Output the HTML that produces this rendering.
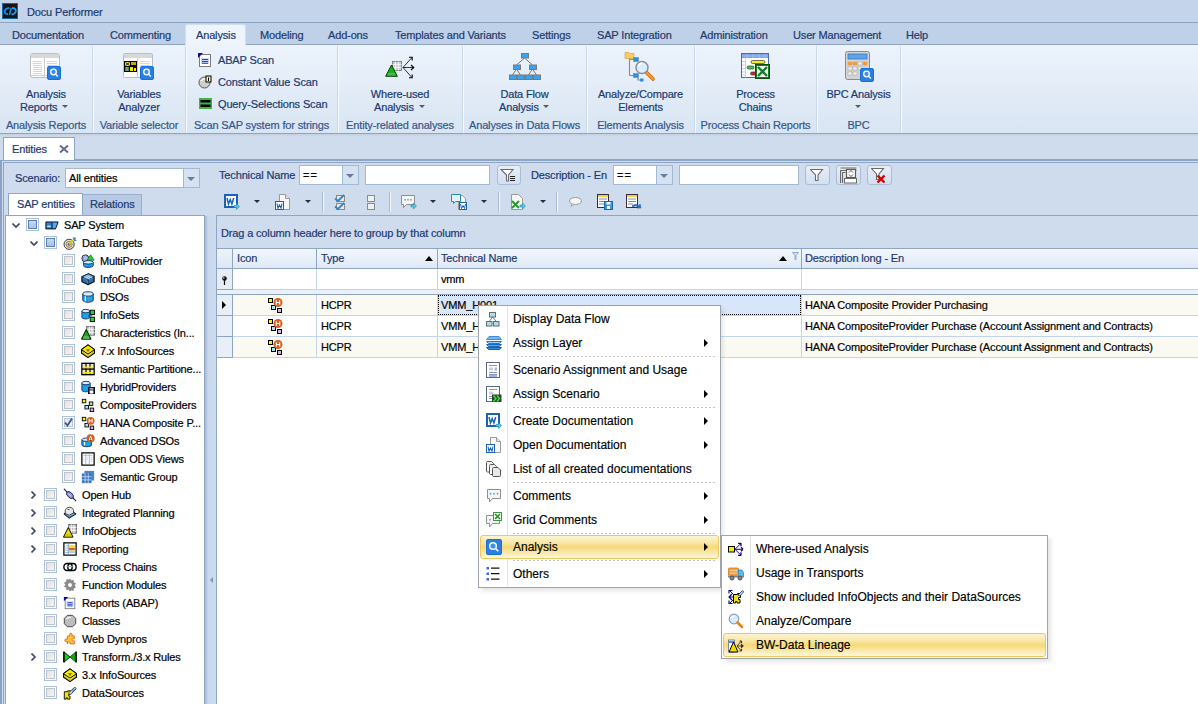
<!DOCTYPE html>
<html><head><meta charset="utf-8">
<style>
*{margin:0;padding:0;box-sizing:border-box}
html,body{width:1198px;height:704px;overflow:hidden;background:#cfddee;font-family:"Liberation Sans",sans-serif;font-size:11px;color:#1b3a6e}
.a{position:absolute}
.t{position:absolute;white-space:nowrap;line-height:13px;font-size:11px;-webkit-text-stroke:0.2px currentColor;letter-spacing:-0.15px}
.m{position:absolute;white-space:nowrap;line-height:14px;font-size:12px;color:#000;-webkit-text-stroke:0.15px currentColor}
#title{left:0;top:0;width:1198px;height:23px;background:#c4d4ea;border-bottom:1px solid #8ea4c1}
#tabs{left:0;top:23px;width:1198px;height:22px;background:#bfd1e8;border-bottom:1px solid #8ea4c1}
#ribbon{left:0;top:45px;width:1198px;height:89px;background:linear-gradient(#ecf3fc,#d9e5f3);border-bottom:1px solid #8ea4c1}
.sep{position:absolute;top:46px;width:2px;height:87px;border-left:1px solid #cad7e8;border-right:1px solid #f7fafd}
.gl{color:#34568a}
.cb{width:13px;height:13px;border:1px solid #abc2e1;background:#fff}
.cb::after{content:"";box-sizing:border-box;position:absolute;left:1px;top:1px;width:9px;height:9px;border:1px solid #bfc3ca;background:linear-gradient(135deg,#e2e2e2,#f4f4f4)}
.cbb::after{background:linear-gradient(#c6d8ef,#a9c2e3);border-color:#5f80b0}
.ti{width:15px;height:15px}
.dd{width:0;height:0;border-left:3px solid transparent;border-right:3px solid transparent;border-top:3px solid #5b5b5b}
.dd2{width:0;height:0;border-left:3px solid transparent;border-right:3px solid transparent;border-top:3px solid #1e2e4e}
.tsep{top:192px;width:2px;height:20px;border-left:1px solid #a8bad2;border-right:1px solid #f4f8fc}
</style></head><body>
<svg width="0" height="0" style="position:absolute">
<defs>
<symbol id="cyl" viewBox="0 0 16 16"><path d="M2 4.5v7c0 1.5 2.7 2.5 6 2.5s6-1 6-2.5v-7" fill="#19a2f0" stroke="#0a2a5a"/><ellipse cx="8" cy="4.5" rx="6" ry="2.5" fill="#d6eefc" stroke="#0a2a5a"/><path d="M5 7v6" stroke="#fff" stroke-width="1.5" opacity=".8"/><path d="M9 7.5v6" stroke="#7d8fb0" stroke-width="1.5"/></symbol>
<symbol id="sq4" viewBox="0 0 16 16"><g stroke="#000" stroke-width="1"><rect x="1.5" y="1.5" width="4" height="4" fill="#f7f200"/><rect x="9.5" y="4.5" width="4" height="4" fill="#b7e08a"/><rect x="4.5" y="8.5" width="4" height="4" fill="#a9e4f7"/><rect x="10.5" y="11.5" width="4" height="4" fill="#d9b0e6"/></g></symbol>
<symbol id="hcpr" viewBox="0 0 16 16"><g stroke="#000" stroke-width="1"><rect x="1.5" y="1.5" width="4" height="4" fill="#f7f200"/><rect x="4.5" y="8.5" width="4" height="4" fill="#a9e4f7"/><rect x="10.5" y="11.5" width="4" height="4" fill="#d9b0e6"/></g><circle cx="11" cy="5.5" r="4.5" fill="#d8601e"/><path d="M9.3 3.3v4.4M12.7 3.3v4.4M9.3 5.5h3.4" stroke="#fff" stroke-width="1.1"/></symbol>
<symbol id="ybox" viewBox="0 0 16 16"><path d="M8 1L15.5 6.5v4L8 15.5L0.5 10.5v-4z" fill="#c9b800" stroke="#000" stroke-width="1.2"/><path d="M8 1L15.5 6.5L8 11.5L0.5 6.5z" fill="#f7ea00" stroke="#000" stroke-width="1.1"/><path d="M5.5 6h5l-2.5 3z" fill="#7a6a00"/><path d="M3 9.5l5 3.5l5-3.5" stroke="#fff8a0" stroke-width="0.8" fill="none"/></symbol>
<symbol id="abap" viewBox="0 0 16 16"><rect x="2.5" y="2.5" width="11" height="12" fill="#fff" stroke="#7a7a7a"/><path d="M1 1h5L1 6z" fill="#0a0aa0"/><rect x="4" y="6" width="8" height="6" fill="#c9daf2"/><path d="M5 7.5h6M5 9.5h6M5 11.3h6" stroke="#1533c8" stroke-width="0.9"/></symbol>
<symbol id="magbadge" viewBox="0 0 16 16"><rect x="0.5" y="0.5" width="15" height="15" rx="1.5" fill="#2a7fe3" stroke="#1a6ed8"/><circle cx="7" cy="7" r="3.3" fill="#3d90ec" stroke="#fff" stroke-width="1.4"/><line x1="9.5" y1="9.5" x2="12.3" y2="12.3" stroke="#fff" stroke-width="1.6"/></symbol>
<symbol id="wordc" viewBox="0 0 16 16"><rect x="1" y="1" width="12" height="12" fill="#fff" stroke="#1a62b8" stroke-width="2"/><path d="M3 4l1.5 6l1.7-4.5l1.7 4.5l1.8-6" fill="none" stroke="#1a62b8" stroke-width="1.5"/><path d="M10 11.5h2.5v-2l3 3l-3 3v-2H10z" fill="#56c7e8" stroke="#1a8ab0" stroke-width="0.6"/></symbol>
<symbol id="wordd" viewBox="0 0 16 16"><path d="M4.5 0.5h6l4 4v11h-10z" fill="#f7f7f7" stroke="#9a9a9a"/><path d="M10.5 0.5v4h4" fill="#e4e4e4" stroke="#9a9a9a"/><rect x="0.5" y="7.5" width="8" height="8" fill="#fff" stroke="#1a62b8"/><path d="M2 9.5l1 4.5l1.5-3l1.5 3l1-4.5" fill="none" stroke="#1a62b8" stroke-width="1.1"/></symbol>
<symbol id="bubble" viewBox="0 0 16 16"><path d="M1.5 1.5h13v9h-8l-3 3.5v-3.5h-2z" fill="#f4f4f4" stroke="#8f8f8f"/><path d="M4.5 5v1.5M8 5v1.5M11.5 5v1.5" stroke="#3a8ec8" stroke-width="1.3"/></symbol>
</defs></svg>
<!-- title bar -->
<div id="title" class="a"></div>
<div class="a" style="left:2px;top:3px;width:16px;height:16px;background:#1a1a1a;border:1px solid #0d5fa8"></div>
<div class="t" style="left:27px;top:6px;font-size:11px">Docu Performer</div>
<!-- tabs -->
<div id="tabs" class="a"></div>
<div class="a" style="left:185px;top:24px;width:61px;height:22px;background:#eef4fc;border:1px solid #d2deec;border-bottom:none;border-radius:3px 3px 0 0"></div>
<div class="t" style="left:12px;top:29px">Documentation</div>
<div class="t" style="left:110px;top:29px">Commenting</div>
<div class="t" style="left:196px;top:29px">Analysis</div>
<div class="t" style="left:260px;top:29px">Modeling</div>
<div class="t" style="left:328px;top:29px">Add-ons</div>
<div class="t" style="left:395px;top:29px">Templates and Variants</div>
<div class="t" style="left:532px;top:29px">Settings</div>
<div class="t" style="left:597px;top:29px">SAP Integration</div>
<div class="t" style="left:700px;top:29px">Administration</div>
<div class="t" style="left:793px;top:29px">User Management</div>
<div class="t" style="left:906px;top:29px">Help</div>
<!-- ribbon -->
<div id="ribbon" class="a"></div>
<div class="sep" style="left:92px"></div>
<div class="sep" style="left:185px"></div>
<div class="sep" style="left:337px"></div>
<div class="sep" style="left:462px"></div>
<div class="sep" style="left:586px"></div>
<div class="sep" style="left:694px"></div>
<div class="sep" style="left:816px"></div>
<div class="sep" style="left:900px"></div>

<div class="t" style="left:0;width:92px;text-align:center;top:88px">Analysis</div>
<div class="t" style="left:20px;top:101px">Reports</div>
<div class="t gl" style="left:0;width:92px;text-align:center;top:119px">Analysis Reports</div>

<div class="t" style="left:93px;width:92px;text-align:center;top:88px">Variables</div>
<div class="t" style="left:93px;width:92px;text-align:center;top:101px">Analyzer</div>
<div class="t gl" style="left:93px;width:92px;text-align:center;top:119px">Variable selector</div>

<div class="t" style="left:218px;top:54px">ABAP Scan</div>
<div class="t" style="left:218px;top:76px">Constant Value Scan</div>
<div class="t" style="left:218px;top:98px">Query-Selections Scan</div>
<div class="t gl" style="left:186px;width:151px;text-align:center;top:119px">Scan SAP system for strings</div>

<div class="t" style="left:338px;width:124px;text-align:center;top:88px">Where-used</div>
<div class="t" style="left:374px;top:101px">Analysis</div>
<div class="t gl" style="left:338px;width:124px;text-align:center;top:119px">Entity-related analyses</div>

<div class="t" style="left:463px;width:123px;text-align:center;top:88px">Data Flow</div>
<div class="t" style="left:499px;top:101px">Analysis</div>
<div class="t gl" style="left:463px;width:123px;text-align:center;top:119px">Analyses in Data Flows</div>

<div class="t" style="left:587px;width:107px;text-align:center;top:88px">Analyze/Compare</div>
<div class="t" style="left:587px;width:107px;text-align:center;top:101px">Elements</div>
<div class="t gl" style="left:587px;width:107px;text-align:center;top:119px">Elements Analysis</div>

<div class="t" style="left:695px;width:121px;text-align:center;top:88px">Process</div>
<div class="t" style="left:695px;width:121px;text-align:center;top:101px">Chains</div>
<div class="t gl" style="left:695px;width:121px;text-align:center;top:119px">Process Chain Reports</div>

<div class="t" style="left:817px;width:83px;text-align:center;top:88px">BPC Analysis</div>
<div class="t gl" style="left:817px;width:83px;text-align:center;top:119px">BPC</div>




<div class="a dd" style="left:62px;top:105px"></div>
<div class="a dd" style="left:419px;top:105px"></div>
<div class="a dd" style="left:543px;top:105px"></div>
<div class="a dd" style="left:855px;top:105px"></div>
<!-- ribbon icons -->
<svg class="a" style="left:1px;top:2px" width="18" height="18" viewBox="0 0 18 18">
 <rect x="1.5" y="1.5" width="15" height="15" fill="#161412" stroke="#0f64b0"/>
 <path d="M8.5 6 Q4 6.3 3.8 9.5 Q3.8 12.3 7 12" fill="none" stroke="#1a86e0" stroke-width="1.9"/>
 <path d="M10.2 6 L8.4 13" stroke="#1a90e8" stroke-width="1.5"/>
 <path d="M11 6 Q15 5.8 14.8 9 Q14.5 12 10.5 12.5" fill="none" stroke="#18a0f0" stroke-width="1.9"/>
</svg>
<svg class="a" style="left:30px;top:53px" width="32" height="28" viewBox="0 0 32 28">
 <rect x="0.5" y="0.5" width="29" height="24" rx="2" fill="#fff" stroke="#bdbdbd"/>
 <rect x="1" y="1" width="28" height="4" fill="#d8d8d8"/>
 <line x1="14.5" y1="5" x2="14.5" y2="24" stroke="#c8c8c8"/>
 <line x1="1" y1="22.5" x2="29" y2="22.5" stroke="#cfcfcf"/>
 <path d="M3 8.5h9M3 10.5h9M3 12.5h9M3 14.5h9M3 16.5h9M3 18.5h9M3 20.5h9M17 8.5h10M17 10.5h10M17 12.5h10" stroke="#d6d6d6"/>
 <rect x="17.5" y="13.5" width="13" height="13" rx="1.5" fill="#2a7fe3" stroke="#1a6ed8"/>
 <circle cx="23.5" cy="19" r="2.8" fill="#3d90ec" stroke="#fff" stroke-width="1.3"/>
 <line x1="25.6" y1="21.2" x2="27.8" y2="23.4" stroke="#fff" stroke-width="1.4"/>
</svg>
<svg class="a" style="left:123px;top:53px" width="32" height="28" viewBox="0 0 32 28">
 <rect x="0.5" y="0.5" width="29" height="24" rx="1" fill="#fff" stroke="#bdbdbd"/>
 <rect x="1" y="1" width="28" height="4" fill="#d8d8d8"/>
 <line x1="14.5" y1="5" x2="14.5" y2="24" stroke="#c8c8c8"/>
 <path d="M17 8.5h10M17 10.5h10M17 12.5h10" stroke="#d6d6d6"/>
 <rect x="1" y="8" width="13" height="11" fill="#000"/>
 <rect x="2" y="9" width="5" height="4" fill="#f5e600"/><path d="M2.5 9.5l4 3M6.5 9.5l-4 3" stroke="#000" stroke-width="0.8"/>
 <rect x="8" y="9" width="5" height="3" fill="#c9a800"/>
 <rect x="2" y="14" width="4" height="4" fill="#1a6b1a"/><path d="M2.5 15h3M2.5 17h3" stroke="#fff" stroke-width="0.8"/>
 <rect x="7" y="14" width="3" height="4" fill="#f5e600"/><rect x="11" y="15" width="2" height="3" fill="#f5e600"/>
 <rect x="17.5" y="13.5" width="13" height="13" rx="1.5" fill="#2a7fe3" stroke="#1a6ed8"/>
 <circle cx="23.5" cy="19" r="2.8" fill="#3d90ec" stroke="#fff" stroke-width="1.3"/>
 <line x1="25.6" y1="21.2" x2="27.8" y2="23.4" stroke="#fff" stroke-width="1.4"/>
</svg>
<svg class="a" style="left:198px;top:53px" width="14" height="14" viewBox="0 0 14 14">
 <rect x="1.5" y="1.5" width="11" height="12" fill="#fff" stroke="#7a7a7a"/>
 <path d="M0 0h5L0 5z" fill="#0a0aa0"/>
 <rect x="3" y="5" width="8" height="6" fill="#c9daf2"/>
 <path d="M4 6.5h6M4 8.5h6M4 10.3h6" stroke="#1533c8" stroke-width="0.9"/>
</svg>
<svg class="a" style="left:198px;top:75px" width="14" height="14" viewBox="0 0 14 14">
 <circle cx="6.5" cy="7.5" r="5.5" fill="#cfcfcf" stroke="#555"/>
 <path d="M3 6 Q5 3 8 4" stroke="#fff" stroke-width="1.2" fill="none"/>
 <rect x="8" y="1" width="5" height="6" fill="#fff7a0" stroke="#000" stroke-width="1"/>
 <path d="M10.5 2.5v3.5" stroke="#000" stroke-width="1"/>
</svg>
<svg class="a" style="left:199px;top:98px" width="13" height="12" viewBox="0 0 13 12">
 <rect x="0" y="0" width="13" height="11" fill="#3fb24a"/>
 <rect x="1.5" y="2" width="10" height="2.5" fill="#000"/>
 <rect x="1.5" y="6.5" width="10" height="2.5" fill="#000"/>
</svg>
<svg class="a" style="left:385px;top:56px" width="30" height="23" viewBox="0 0 30 23">
 <rect x="7.5" y="5.5" width="9" height="9" fill="#d0d0d0" stroke="#7d7d7d" stroke-width="0.9"/>
 <path d="M7.5 8.5h9M7.5 11.5h9M10.5 5.5v9M13.5 5.5v9" stroke="#f4f4f4" stroke-width="0.8"/>
 <path d="M6.5 9 L12.3 20.3 L0.7 20.3 Z" fill="#19b01e" stroke="#053a05" stroke-width="1"/>
 <path d="M3 17.5h7M2.5 19h8" stroke="#6ac06a" stroke-width="0.8"/>
 <path d="M18 11.5h10.5M18 11.5l8.5-9.5M18 11.5l8.5 9.5" stroke="#000" stroke-width="0.8" fill="none"/>
 <path d="M26 9l2.8 2.5L26 14M24 1.3h3.2v3.2M24 21.7h3.2v-3.2" stroke="#000" stroke-width="1.1" fill="none"/>
</svg>
<svg class="a" style="left:509px;top:53px" width="32" height="28" viewBox="0 0 32 28">
 <path d="M15.5 5 L7.5 12 M15.5 5 L23.5 12 M7.5 16 L3.5 22 M7.5 16 L11.5 22 M23.5 16 L19.5 22 M23.5 16 L27.5 22" stroke="#6a6a6a" stroke-width="0.9"/>
 <g fill="#3aa3f0" stroke="#7a7a7a" stroke-width="1">
 <rect x="12.5" y="0.5" width="7" height="4.5"/>
 <rect x="4.5" y="12" width="7" height="4.5"/><rect x="20.5" y="12" width="7" height="4.5"/>
 <rect x="0.5" y="22" width="7" height="4.5"/><rect x="8.5" y="22" width="7" height="4.5"/><rect x="16.5" y="22" width="7" height="4.5"/><rect x="24.5" y="22" width="7" height="4.5"/>
 </g>
</svg>
<svg class="a" style="left:624px;top:51px" width="32" height="32" viewBox="0 0 32 32">
 <path d="M1 1.5h4l1 1h4v5H1z" fill="#f6cc60" stroke="#d8a640" stroke-width="0.7"/>
 <path d="M5.5 7.5v17M5.5 8.5h5M5.5 24.5h5M14 26v3h3" stroke="#8a8a8a" stroke-width="1.1" fill="none"/>
 <rect x="9.5" y="6.5" width="5" height="4" fill="#2f8ee0" stroke="#6a8ab0" stroke-width="0.6"/><rect x="9.5" y="22.5" width="5" height="4" fill="#2f8ee0" stroke="#6a8ab0" stroke-width="0.6"/><rect x="16" y="27.5" width="3.5" height="3" fill="#2f8ee0"/>
 <path d="M22.5 21.5 L29 28" stroke="#c85a00" stroke-width="3.6" stroke-linecap="round"/>
 <path d="M22.5 21.5 L29 28" stroke="#f8a020" stroke-width="2.2" stroke-linecap="round"/>
 <circle cx="18" cy="16.5" r="6" fill="#dceefc" stroke="#8a8e96" stroke-width="1.5"/>
 <path d="M14.5 15c.5-2 2-3 4-3" stroke="#fff" stroke-width="1.3" fill="none"/>
</svg>
<svg class="a" style="left:741px;top:52px" width="30" height="28" viewBox="0 0 30 28">
 <rect x="0.5" y="1.5" width="27" height="24" fill="#fff" stroke="#4a6ab8"/>
 <rect x="1" y="2" width="26" height="4" fill="#7aa2e0"/>
 <path d="M1 4h26M6 2v4M12 2v4M18 2v4M24 2v4" stroke="#a8c4ee" stroke-width="0.8"/>
 <path d="M4.5 6v19.5M1 9.5h3.5M1 13h3.5M1 16.5h3.5M1 20h3.5M1 23h3.5" stroke="#b8c8e0" stroke-width="0.8"/>
 <rect x="10" y="8.5" width="14" height="3" rx="1.5" fill="#f4ee20" stroke="#333" stroke-width="0.7"/>
 <rect x="6" y="14" width="7" height="3" rx="1.5" fill="#40d040" stroke="#333" stroke-width="0.7"/>
 <rect x="9.5" y="20" width="6" height="3" rx="1.5" fill="#e82020" stroke="#333" stroke-width="0.7"/>
 <rect x="14.5" y="12.5" width="14" height="14" fill="#1a7a2a" stroke="#0d4d12"/>
 <rect x="16" y="14" width="11" height="11" fill="#f0f8f0"/>
 <path d="M17 15l9 9M26 15l-9 9" stroke="#1a7a2a" stroke-width="2.4"/>
</svg>
<svg class="a" style="left:845px;top:51px" width="30" height="32" viewBox="0 0 30 32">
 <rect x="0.5" y="0.5" width="24" height="28" rx="2" fill="#d4d4d4" stroke="#8a8a8a"/>
 <rect x="3" y="3" width="19" height="5" fill="#5aa6ea" stroke="#3b78b8" stroke-width="0.8"/>
 <g fill="#f4f4f4" stroke="#a0a0a0" stroke-width="0.5">
 <rect x="3" y="11" width="4" height="3"/><rect x="8" y="11" width="4" height="3"/><rect x="13" y="11" width="4" height="3"/><rect x="18" y="11" width="4" height="3"/>
 <rect x="3" y="16" width="4" height="3"/><rect x="8" y="16" width="4" height="3"/><rect x="13" y="16" width="4" height="3"/>
 <rect x="3" y="21" width="4" height="3"/><rect x="8" y="21" width="4" height="3"/>
 </g>
 <rect x="3" y="11" width="4" height="3" fill="#f59a3a"/><rect x="8" y="11" width="4" height="3" fill="#f59a3a"/><rect x="18" y="11" width="4" height="3" fill="#f59a3a"/>
 <rect x="15.5" y="17.5" width="13" height="13" rx="1.5" fill="#2a7fe3" stroke="#1a6ed8"/>
 <circle cx="21.5" cy="23" r="2.8" fill="#3d90ec" stroke="#fff" stroke-width="1.3"/>
 <line x1="23.6" y1="25.2" x2="25.8" y2="27.4" stroke="#fff" stroke-width="1.4"/>
</svg>

<!-- below ribbon -->
<div class="a" style="left:0;top:134px;width:1198px;height:27px;background:linear-gradient(#c2d0e3,#cfdcee 3px,#cfdcee)"></div>
<div class="a" style="left:3px;top:137px;width:72px;height:24px;background:#fff;border:1px solid #8ea6c4;border-bottom:none"></div>
<div class="t" style="left:12px;top:143px">Entities</div>
<svg class="a" style="left:59px;top:145px" width="10" height="8" viewBox="0 0 10 8"><path d="M1 0.5 L9 7.5 M9 0.5 L1 7.5" stroke="#5d6e8e" stroke-width="2"/></svg>
<!-- content panel -->
<div class="a" style="left:0;top:160px;width:1198px;height:544px;background:#cfdcee;border-top:1px solid #8ea6c4"></div>
<div class="a" style="left:3px;top:162px;width:1195px;height:542px;border-top:1px solid #8ea6c4;border-left:1px solid #8ea6c4"></div>
<div class="a" style="left:0;top:160px;width:2px;height:544px;background:#8aa3c4"></div>
<div class="a" style="left:75px;top:159px;width:1123px;height:1px;background:#8ea6c4"></div>

<div class="t" style="left:15px;top:172px">Scenario:</div>
<div class="a" style="left:65px;top:168px;width:135px;height:20px;background:#fff;border:1px solid #a3b8d3"></div>
<div class="a" style="left:183px;top:169px;width:16px;height:18px;background:#d5e2f2;border-left:1px solid #a3b8d3"></div>
<div class="a" style="left:187px;top:177px;width:0;height:0;border-left:4px solid transparent;border-right:4px solid transparent;border-top:4px solid #6a7d98"></div>
<div class="t" style="left:69px;top:172px;color:#000">All entities</div>

<div class="a" style="left:82px;top:194px;width:60px;height:22px;background:#b9cbe4;border:1px solid #98aecb;border-bottom:none"></div>
<div class="a" style="left:8px;top:193px;width:75px;height:23px;background:#fff;border:1px solid #8ea6c4;border-bottom:none"></div>
<div class="t" style="left:17px;top:198px">SAP entities</div>
<div class="t" style="left:90px;top:198px">Relations</div>

<!-- tree panel -->
<div class="a" style="left:5px;top:215px;width:200px;height:489px;background:#fff;border:1px solid #8ea6c4;border-bottom:none"></div>
<!-- splitter -->
<div class="a" style="left:205px;top:216px;width:11px;height:488px;background:linear-gradient(90deg,#a6bad5,#c9d8ec 30%,#cddcee)"></div>
<div class="a" style="left:210px;top:577px;width:0;height:0;border-top:3px solid transparent;border-bottom:3px solid transparent;border-right:3px solid #7e93b1"></div>

<!-- filter bar -->
<div class="t" style="left:219px;top:169px">Technical Name</div>
<div class="a" style="left:299px;top:165px;width:60px;height:20px;background:#fff;border:1px solid #a3b8d3"></div>
<div class="a" style="left:342px;top:166px;width:16px;height:18px;background:#d5e2f2;border-left:1px solid #a3b8d3"></div>
<div class="a" style="left:346px;top:174px;width:0;height:0;border-left:4px solid transparent;border-right:4px solid transparent;border-top:4px solid #6a7d98"></div>
<div class="t" style="left:303px;top:169px;color:#000;letter-spacing:1px">==</div>
<div class="a" style="left:365px;top:165px;width:125px;height:20px;background:#fff;border:1px solid #a3b8d3"></div>
<div class="a" style="left:497px;top:165px;width:24px;height:20px;background:linear-gradient(#e6eef8,#d3e0f0);border:1px solid #a9bcd5;border-radius:3px"></div>
<div class="t" style="left:531px;top:169px">Description - En</div>
<div class="a" style="left:613px;top:165px;width:60px;height:20px;background:#fff;border:1px solid #a3b8d3"></div>
<div class="a" style="left:656px;top:166px;width:16px;height:18px;background:#d5e2f2;border-left:1px solid #a3b8d3"></div>
<div class="a" style="left:660px;top:174px;width:0;height:0;border-left:4px solid transparent;border-right:4px solid transparent;border-top:4px solid #6a7d98"></div>
<div class="t" style="left:617px;top:169px;color:#000;letter-spacing:1px">==</div>
<div class="a" style="left:679px;top:165px;width:120px;height:20px;background:#fff;border:1px solid #a3b8d3"></div>
<div class="a" style="left:805px;top:165px;width:25px;height:20px;background:linear-gradient(#e6eef8,#d3e0f0);border:1px solid #a9bcd5;border-radius:3px"></div>
<div class="a" style="left:836px;top:165px;width:25px;height:20px;background:linear-gradient(#e6eef8,#d3e0f0);border:1px solid #a9bcd5;border-radius:3px"></div>
<div class="a" style="left:867px;top:165px;width:25px;height:20px;background:linear-gradient(#e6eef8,#d3e0f0);border:1px solid #a9bcd5;border-radius:3px"></div>


<!-- toolbar icons -->
<svg class="a" style="left:224px;top:194px" width="16" height="16" viewBox="0 0 16 16"><use href="#wordc"/></svg>
<div class="a dd2" style="left:254px;top:200px"></div>
<svg class="a" style="left:275px;top:194px" width="16" height="16" viewBox="0 0 16 16"><use href="#wordd"/></svg>
<div class="a dd2" style="left:305px;top:200px"></div>
<div class="a tsep" style="left:322px"></div>
<svg class="a" style="left:334px;top:194px" width="14" height="16" viewBox="0 0 14 16"><rect x="2.5" y="1.5" width="8" height="6" fill="#e8e8e8" stroke="#8a8a8a"/><rect x="2.5" y="9.5" width="8" height="6" fill="#e8e8e8" stroke="#8a8a8a"/><path d="M1 4.5l3 2.5l6-6M1 12.5l3 2.5l6-6" fill="none" stroke="#2a8ac8" stroke-width="1.8"/></svg>
<svg class="a" style="left:366px;top:194px" width="10" height="16" viewBox="0 0 10 16"><rect x="1.5" y="1.5" width="7" height="6" fill="#f0f0f0" stroke="#8a8a8a"/><rect x="1.5" y="9.5" width="7" height="6" fill="#f0f0f0" stroke="#8a8a8a"/></svg>
<div class="a tsep" style="left:389px"></div>
<svg class="a" style="left:400px;top:194px" width="17" height="16" viewBox="0 0 17 16"><path d="M1.5 1.5h13v9h-8l-3 3v-3h-2z" fill="#f4f4f4" stroke="#8f8f8f"/><path d="M5 5v1.5M8 5v1.5M11 5v1.5" stroke="#3a8ec8" stroke-width="1.2"/><path d="M11 11h2.5v-2l3 3l-3 3v-2H11z" fill="#56c7e8" stroke="#1a8ab0" stroke-width="0.6"/></svg>
<div class="a dd2" style="left:430px;top:200px"></div>
<svg class="a" style="left:451px;top:194px" width="17" height="16" viewBox="0 0 17 16"><path d="M7.5 1.5h4l3 3v11h-7z" fill="#fff" stroke="#9a9a9a"/><path d="M0.5 0.5h9v7h-5l-2 2v-2h-2z" fill="#e8f2f6" stroke="#2a8aa8"/><rect x="8.5" y="8.5" width="7" height="7" fill="#fff" stroke="#1a62b8"/><path d="M9.5 10l1 4.5l1.5-3l1.5 3l1-4.5" fill="none" stroke="#1a62b8" stroke-width="1"/></svg>
<div class="a dd2" style="left:481px;top:200px"></div>
<div class="a tsep" style="left:498px"></div>
<svg class="a" style="left:510px;top:194px" width="16" height="16" viewBox="0 0 16 16"><path d="M1.5 0.5h7l4 4v11h-11z" fill="#f7f7f7" stroke="#9a9a9a"/><path d="M2 7l7 7M9 7l-7 7" stroke="#2a9a2a" stroke-width="2"/><path d="M10 11h2.5v-2l3 3l-3 3v-2H10z" fill="#56c7e8" stroke="#1a8ab0" stroke-width="0.6"/></svg>
<div class="a dd2" style="left:540px;top:200px"></div>
<div class="a tsep" style="left:556px"></div>
<svg class="a" style="left:569px;top:197px" width="13" height="10" viewBox="0 0 13 10"><ellipse cx="6.5" cy="4" rx="6" ry="3.5" fill="#f6f6f6" stroke="#9a9a9a"/><path d="M3 7l-1 2.5l3-2" fill="#f6f6f6" stroke="#9a9a9a" stroke-width="0.8"/></svg>
<svg class="a" style="left:597px;top:194px" width="16" height="16" viewBox="0 0 16 16"><rect x="0.5" y="0.5" width="11" height="13" fill="#fff" stroke="#3a2a3a"/><rect x="1" y="1" width="10" height="2" fill="#f2d040"/><path d="M2 5h8M2 7.5h8M2 10h5" stroke="#7a8ad8" stroke-width="1.2"/><rect x="7.5" y="7.5" width="8" height="8" fill="#3a9ae0" stroke="#1a6ab0"/><rect x="9.5" y="8" width="4" height="2.5" fill="#fff"/><rect x="10" y="12" width="3" height="3" fill="#fff"/></svg>
<svg class="a" style="left:626px;top:194px" width="16" height="16" viewBox="0 0 16 16"><rect x="0.5" y="0.5" width="11" height="13" fill="#fff" stroke="#3a2a3a"/><rect x="1" y="1" width="10" height="2" fill="#f2d040"/><path d="M2 5h8M2 7.5h8M2 10h5" stroke="#7a8ad8" stroke-width="1.2"/><path d="M6 12c2-2 5-2 7 0l1-2l1 4h-4l1.3-1c-1.5-1.5-3.8-1.5-5.3 0z" fill="#2a7ad8" stroke="#1a5ab0" stroke-width="0.6"/></svg>
<!-- filter button icons -->
<svg class="a" style="left:500px;top:168px" width="16" height="14" viewBox="0 0 16 14"><path d="M1 1.5h12L8.5 7v6h-2V7z" fill="#fff" stroke="#6a6a6a" stroke-width="1.1"/><path d="M10 8.5h5M10 10.5h5M10 12.5h5" stroke="#222" stroke-width="1.1"/></svg>
<svg class="a" style="left:810px;top:168px" width="14" height="14" viewBox="0 0 14 14"><path d="M0.5 1.5h12L8 7v5.5H5.5V7z" fill="#fff" stroke="#6a6a6a" stroke-width="1.1"/></svg>
<svg class="a" style="left:840px;top:167px" width="17" height="17" viewBox="0 0 17 17"><path d="M0.5 16V3.5h16M2.5 16V5.5h3M0.5 1h16" fill="none" stroke="#6a6a6a" stroke-width="1.1"/><rect x="6.5" y="2.5" width="9" height="8" fill="#fff" stroke="#5a5a5a" stroke-width="1.2"/><path d="M9 5.5l2-2l2 2M9 7.5l2 2l2-2" fill="none" stroke="#444" stroke-width="0.9"/><rect x="4.5" y="11.5" width="12" height="4.5" fill="#fff" stroke="#6a6a6a"/></svg>
<svg class="a" style="left:871px;top:167px" width="16" height="16" viewBox="0 0 16 16"><path d="M0.5 1.5h12L8 7v5.5H5.5V7z" fill="#fff" stroke="#6a6a6a" stroke-width="1.1"/><path d="M6.5 8.5l7 7M13.5 8.5l-7 7" stroke="#d80000" stroke-width="2.4"/></svg>

<!-- grid -->
<div class="a" style="left:216px;top:215px;width:982px;height:489px;background:#fff;border-left:1px solid #8ea6c4;border-top:1px solid #8ea6c4"></div>
<div class="a" style="left:217px;top:216px;width:981px;height:33px;background:#cfdcee;border-bottom:1px solid #8ea6c4"></div>
<div class="t" style="left:221px;top:227px">Drag a column header here to group by that column</div>
<div class="a" style="left:217px;top:249px;width:981px;height:20px;background:linear-gradient(#f2f7fd,#dfe9f6);border-bottom:1px solid #8ea6c4"></div>
<div class="a" style="left:217px;top:249px;width:16px;height:20px;background:linear-gradient(#eef3fa,#dde7f4);border-right:1px solid #8ea6c4;border-bottom:1px solid #8ea6c4"></div>
<div class="a" style="left:217px;top:269px;width:16px;height:21px;background:#e6edf7;border-right:1px solid #8ea6c4;border-bottom:1px solid #8ea6c4"></div>
<div class="a" style="left:316px;top:249px;width:1px;height:20px;background:#8ea6c4"></div>
<div class="a" style="left:437px;top:249px;width:1px;height:20px;background:#8ea6c4"></div>
<div class="a" style="left:801px;top:249px;width:1px;height:20px;background:#8ea6c4"></div>
<div class="t" style="left:237px;top:252px">Icon</div>
<div class="t" style="left:321px;top:252px">Type</div>
<div class="t" style="left:441px;top:252px">Technical Name</div>
<div class="t" style="left:805px;top:252px">Description long - En</div>
<div class="a" style="left:425px;top:256px;width:0;height:0;border-left:4px solid transparent;border-right:4px solid transparent;border-bottom:5px solid #000"></div>
<div class="a" style="left:779px;top:256px;width:0;height:0;border-left:4px solid transparent;border-right:4px solid transparent;border-bottom:5px solid #000"></div>
<!-- filter row -->
<div class="a" style="left:233px;top:269px;width:965px;height:21px;background:#fff;border-bottom:1px solid #c3d4ec"></div>
<div class="a" style="left:316px;top:269px;width:1px;height:21px;background:#c3d4ec"></div>
<div class="a" style="left:437px;top:269px;width:1px;height:21px;background:#c3d4ec"></div>
<div class="a" style="left:801px;top:269px;width:1px;height:21px;background:#c3d4ec"></div>
<div class="t" style="left:441px;top:273px;color:#000">vmm</div>
<div class="a" style="left:217px;top:290px;width:981px;height:5px;background:#e9f0f9;border-bottom:1px solid #8ea6c4"></div>
<div class="a" style="left:233px;top:295px;width:965px;height:21px;background:#fbfaf2;border-bottom:1px solid #c3d4ec"></div>
<div class="a" style="left:217px;top:295px;width:16px;height:21px;background:#e8eff8;border-right:1px solid #8ea6c4;border-bottom:1px solid #8ea6c4"></div>
<div class="a" style="left:316px;top:295px;width:1px;height:21px;background:#c3d4ec"></div>
<div class="a" style="left:437px;top:295px;width:1px;height:21px;background:#c3d4ec"></div>
<div class="a" style="left:801px;top:295px;width:1px;height:21px;background:#c3d4ec"></div>
<div class="t" style="left:321px;top:299px;color:#000">HCPR</div>
<div class="t" style="left:441px;top:299px;color:#000">VMM_H001</div>
<div class="t" style="left:805px;top:299px;color:#000">HANA Composite Provider Purchasing</div>
<svg class="a" style="left:267px;top:297px" width="16" height="16" viewBox="0 0 16 16"><use href="#hcpr"/></svg>
<div class="a" style="left:233px;top:316px;width:965px;height:21px;background:#ffffff;border-bottom:1px solid #c3d4ec"></div>
<div class="a" style="left:217px;top:316px;width:16px;height:21px;background:#e8eff8;border-right:1px solid #8ea6c4;border-bottom:1px solid #8ea6c4"></div>
<div class="a" style="left:316px;top:316px;width:1px;height:21px;background:#c3d4ec"></div>
<div class="a" style="left:437px;top:316px;width:1px;height:21px;background:#c3d4ec"></div>
<div class="a" style="left:801px;top:316px;width:1px;height:21px;background:#c3d4ec"></div>
<div class="t" style="left:321px;top:320px;color:#000">HCPR</div>
<div class="t" style="left:441px;top:320px;color:#000">VMM_H002</div>
<div class="t" style="left:805px;top:320px;color:#000">HANA CompositeProvider Purchase (Account Assignment and Contracts)</div>
<svg class="a" style="left:267px;top:318px" width="16" height="16" viewBox="0 0 16 16"><use href="#hcpr"/></svg>
<div class="a" style="left:233px;top:337px;width:965px;height:21px;background:#fbfaf2;border-bottom:1px solid #c3d4ec"></div>
<div class="a" style="left:217px;top:337px;width:16px;height:21px;background:#e8eff8;border-right:1px solid #8ea6c4;border-bottom:1px solid #8ea6c4"></div>
<div class="a" style="left:316px;top:337px;width:1px;height:21px;background:#c3d4ec"></div>
<div class="a" style="left:437px;top:337px;width:1px;height:21px;background:#c3d4ec"></div>
<div class="a" style="left:801px;top:337px;width:1px;height:21px;background:#c3d4ec"></div>
<div class="t" style="left:321px;top:341px;color:#000">HCPR</div>
<div class="t" style="left:441px;top:341px;color:#000">VMM_H003</div>
<div class="t" style="left:805px;top:341px;color:#000">HANA CompositeProvider Purchase (Account Assignment and Contracts)</div>
<svg class="a" style="left:267px;top:339px" width="16" height="16" viewBox="0 0 16 16"><use href="#hcpr"/></svg>
<!-- tree items -->
<svg class="a" style="left:12px;top:223px" width="8" height="6"><path d="M0.5 0.5 L4 4 L7.5 0.5" fill="none" stroke="#3c4a5e" stroke-width="1.6"/></svg>
<div class="a cb cbb" style="left:26px;top:218px"></div>
<svg class="a" style="left:45px;top:218px" width="14" height="14" viewBox="0 0 16 16"><path d="M1 4.5h14l-3 8H1z" fill="#2f7fd8" stroke="#000"/><path d="M8 5v7" stroke="#000" stroke-width="0.8"/><path d="M2.5 9.5h4" stroke="#fff" stroke-width="1.2"/><path d="M9 5.5h5l-2.3 6H9z" fill="#5aa4ec"/></svg>
<div class="t" style="left:64px;top:219px;color:#000">SAP System</div>
<svg class="a" style="left:30px;top:241px" width="8" height="6"><path d="M0.5 0.5 L4 4 L7.5 0.5" fill="none" stroke="#3c4a5e" stroke-width="1.6"/></svg>
<div class="a cb cbb" style="left:44px;top:236px"></div>
<svg class="a" style="left:63px;top:236px" width="14" height="14" viewBox="0 0 16 16"><circle cx="7" cy="9.5" r="5.8" fill="#efe9c2" stroke="#222"/><circle cx="7" cy="9.5" r="3.5" fill="#d8d3b0" stroke="#777"/><circle cx="7" cy="9.5" r="1.5" fill="#555"/><path d="M7 9.5L12.5 3.5" stroke="#e2c800" stroke-width="2"/><path d="M11 1.5l4 0.5l-1 2l2 1l-3 1z" fill="#2a84d8"/></svg>
<div class="t" style="left:82px;top:237px;color:#000">Data Targets</div>
<div class="a cb" style="left:62px;top:254px"></div>
<svg class="a" style="left:81px;top:254px" width="14" height="14" viewBox="0 0 16 16"><circle cx="5" cy="5" r="4" fill="#8fa6d6" stroke="#223"/><path d="M3 2.5l3 5M5 2l2.5 4.5" stroke="#dde" stroke-width="0.8"/><path d="M11 1l4 6H7z" fill="#1ed91e" stroke="#083"/><path d="M3 9.5v4c0 1 2 1.8 5 1.8s6-.8 6-1.8v-4" fill="#19a2f0" stroke="#0a2a5a"/><ellipse cx="8.5" cy="9.5" rx="5.5" ry="2" fill="#d6eefc" stroke="#0a2a5a"/></svg>
<div class="t" style="left:100px;top:255px;color:#000">MultiProvider</div>
<div class="a cb" style="left:62px;top:272px"></div>
<svg class="a" style="left:81px;top:272px" width="14" height="14" viewBox="0 0 16 16"><path d="M1 5.5L8.5 2L15 5v6L8 14.5L1 11z" fill="#2f6fa8" stroke="#000" stroke-width="1.2"/><path d="M1 5.5L8 9L15 5L8.5 2z" fill="#6aa6d8" stroke="#0a1a3a" stroke-width="0.9"/><path d="M8 9v5.5" stroke="#0a1a3a"/><path d="M3.5 5.2l7 3.2M5.8 4l7 3.2M5 7l5.5-2.8M7.8 8l5.2-2.6" stroke="#d0e6f8" stroke-width="0.8"/><path d="M2 7l5.5 3v3.5" stroke="#5a9ad0" stroke-width="0.8" fill="none"/></svg>
<div class="t" style="left:100px;top:273px;color:#000">InfoCubes</div>
<div class="a cb" style="left:62px;top:290px"></div>
<svg class="a" style="left:81px;top:290px" width="14" height="14" viewBox="0 0 16 16"><use href="#cyl"/></svg>
<div class="t" style="left:100px;top:291px;color:#000">DSOs</div>
<div class="a cb" style="left:62px;top:308px"></div>
<svg class="a" style="left:81px;top:308px" width="14" height="14" viewBox="0 0 16 16"><path d="M1 3.5v7c0 1.2 2 2 4.5 2s4.5-.8 4.5-2v-7" fill="#19a2f0" stroke="#0a2a5a"/><ellipse cx="5.5" cy="3.5" rx="4.5" ry="2" fill="#d6eefc" stroke="#0a2a5a"/><rect x="10.5" y="2.5" width="5" height="5" fill="#1ed91e" stroke="#000"/><rect x="10.5" y="10.5" width="5" height="5" fill="#1ed91e" stroke="#000"/><path d="M8 9h5" stroke="#0a2a5a"/></svg>
<div class="t" style="left:100px;top:309px;color:#000">InfoSets</div>
<div class="a cb" style="left:62px;top:326px"></div>
<svg class="a" style="left:81px;top:326px" width="14" height="14" viewBox="0 0 16 16"><rect x="6.5" y="0.5" width="9" height="10" fill="#bdbdbd" stroke="#555" stroke-width="0.9"/><path d="M6.5 3.8h9M6.5 7.2h9M9.5 0.5v10M12.5 0.5v10" stroke="#fff" stroke-width="1"/><path d="M6 4L11.5 15H0.5z" fill="#13b013" stroke="#000" stroke-width="1.1"/><path d="M3 12.5h6M2.5 14h7" stroke="#8ad08a" stroke-width="0.9"/></svg>
<div class="t" style="left:100px;top:327px;color:#000">Characteristics (In...</div>
<div class="a cb" style="left:62px;top:344px"></div>
<svg class="a" style="left:81px;top:344px" width="14" height="14" viewBox="0 0 16 16"><use href="#ybox"/></svg>
<div class="t" style="left:100px;top:345px;color:#000">7.x InfoSources</div>
<div class="a cb" style="left:62px;top:362px"></div>
<svg class="a" style="left:81px;top:362px" width="14" height="14" viewBox="0 0 16 16"><rect x="1" y="1.5" width="14" height="13" fill="#fff" stroke="#000" stroke-width="1.5"/><path d="M1 8h14M5.7 1.5v13M10.3 1.5v13" stroke="#000" stroke-width="1.5"/><path d="M2 6h12M2 12.5h12" stroke="#f2e200" stroke-width="2"/><path d="M2 3.5h3M6.5 3.5h3M11 3.5h3M2 10h3M6.5 10h3M11 10h3" stroke="#bbb" stroke-width="0.8"/></svg>
<div class="t" style="left:100px;top:363px;color:#000">Semantic Partitione...</div>
<div class="a cb" style="left:62px;top:380px"></div>
<svg class="a" style="left:81px;top:380px" width="14" height="14" viewBox="0 0 16 16"><path d="M1 3.5v8c0 1.2 2 2 4.5 2s5-.8 5-2v-8" fill="#19a2f0" stroke="#0a2a5a"/><ellipse cx="5.7" cy="3.5" rx="4.8" ry="2" fill="#d6eefc" stroke="#0a2a5a"/><rect x="8.5" y="8.5" width="7" height="7" fill="#1a2a8a" stroke="#000"/><rect x="10" y="12" width="4" height="3.5" fill="#fff"/><rect x="10" y="9" width="4" height="2" fill="#9ab"/></svg>
<div class="t" style="left:100px;top:381px;color:#000">HybridProviders</div>
<div class="a cb" style="left:62px;top:398px"></div>
<svg class="a" style="left:81px;top:398px" width="14" height="14" viewBox="0 0 16 16"><use href="#sq4"/></svg>
<div class="t" style="left:100px;top:399px;color:#000">CompositeProviders</div>
<div class="a cb cbc" style="left:62px;top:416px"></div>
<svg class="a" style="left:81px;top:416px" width="14" height="14" viewBox="0 0 16 16"><use href="#hcpr"/></svg>
<div class="t" style="left:100px;top:417px;color:#000">HANA Composite P...</div>
<div class="a cb" style="left:62px;top:434px"></div>
<svg class="a" style="left:81px;top:434px" width="14" height="14" viewBox="0 0 16 16"><path d="M1 6.5v6c0 1.2 2.5 2 5.5 2s5.5-.8 5.5-2v-6" fill="#19a2f0" stroke="#0a2a5a"/><ellipse cx="6.5" cy="6.5" rx="5.5" ry="2" fill="#d6eefc" stroke="#0a2a5a"/><path d="M4 9v4" stroke="#fff" stroke-width="1.3"/><circle cx="11" cy="5" r="4.6" fill="#d8601e"/><path d="M9.3 7.5l1.7-5l1.7 5M9.8 6h2.4" stroke="#fff" stroke-width="1"/></svg>
<div class="t" style="left:100px;top:435px;color:#000">Advanced DSOs</div>
<div class="a cb" style="left:62px;top:452px"></div>
<svg class="a" style="left:81px;top:452px" width="14" height="14" viewBox="0 0 16 16"><rect x="1" y="1" width="14" height="14" fill="#fff" stroke="#000" stroke-width="1.4"/><path d="M2 4h12" stroke="#b8c8e0"/><path d="M5.5 2v12M9.5 2v12" stroke="#88a8d8" stroke-width="0.9"/><path d="M3 6.5h1M3 8.5h1M3 10.5h1M7 6.5h1M7 8.5h1M11 6.5h2M11 8.5h2M11 10.5h2" stroke="#aaa" stroke-width="0.7"/></svg>
<div class="t" style="left:100px;top:453px;color:#000">Open ODS Views</div>
<div class="a cb" style="left:62px;top:470px"></div>
<svg class="a" style="left:81px;top:470px" width="14" height="14" viewBox="0 0 16 16"><rect x="4" y="1" width="11" height="11" fill="#4a86d0"/><rect x="1" y="4" width="11" height="11" fill="#3d74c4"/><path d="M1 7.7h11M1 11.3h11M4.7 4v11M8.3 4v11" stroke="#cfe2f8" stroke-width="0.9"/></svg>
<div class="t" style="left:100px;top:471px;color:#000">Semantic Group</div>
<svg class="a" style="left:31px;top:491px" width="6" height="8"><path d="M0.5 0.5 L4 4 L0.5 7.5" fill="none" stroke="#3c4a5e" stroke-width="1.6"/></svg>
<div class="a cb" style="left:44px;top:488px"></div>
<svg class="a" style="left:63px;top:488px" width="14" height="14" viewBox="0 0 16 16"><path d="M1 1L15 15" stroke="#1a1a4a" stroke-width="1.3"/><ellipse cx="8" cy="8" rx="4.8" ry="2.8" transform="rotate(45 8 8)" fill="#8e9ee0" stroke="#1a1a4a"/><path d="M6 6.5l3 3" stroke="#dde" stroke-width="1"/></svg>
<div class="t" style="left:82px;top:489px;color:#000">Open Hub</div>
<svg class="a" style="left:31px;top:509px" width="6" height="8"><path d="M0.5 0.5 L4 4 L0.5 7.5" fill="none" stroke="#3c4a5e" stroke-width="1.6"/></svg>
<div class="a cb" style="left:44px;top:506px"></div>
<svg class="a" style="left:63px;top:506px" width="14" height="14" viewBox="0 0 16 16"><path d="M1 9L9 5L15 9L7 14z" fill="#3b7cc4" stroke="#000"/><path d="M3 9.5L9 6.5L13 9L7 12z" fill="#8cc6ee"/><path d="M2.5 5.5c0-2.5 2.5-4 5-4s4.5 1.5 4.5 3.5v3L7 10.5L2.5 8.5z" fill="#e8e8e8" stroke="#333"/><path d="M3.5 4.5c2-1.5 4-1.5 6 0" stroke="#fff" stroke-width="1"/></svg>
<div class="t" style="left:82px;top:507px;color:#000">Integrated Planning</div>
<svg class="a" style="left:31px;top:527px" width="6" height="8"><path d="M0.5 0.5 L4 4 L0.5 7.5" fill="none" stroke="#3c4a5e" stroke-width="1.6"/></svg>
<div class="a cb" style="left:44px;top:524px"></div>
<svg class="a" style="left:63px;top:524px" width="14" height="14" viewBox="0 0 16 16"><rect x="6.5" y="0.5" width="9" height="10" fill="#bdbdbd" stroke="#555" stroke-width="0.9"/><path d="M6.5 3.8h9M6.5 7.2h9M9.5 0.5v10M12.5 0.5v10" stroke="#fff" stroke-width="1"/><path d="M6 4L11.5 15H0.5z" fill="#f0dc00" stroke="#000" stroke-width="1.1"/><path d="M3 12.5h6M2.5 14h7" stroke="#b8a800" stroke-width="0.9"/></svg>
<div class="t" style="left:82px;top:525px;color:#000">InfoObjects</div>
<svg class="a" style="left:31px;top:545px" width="6" height="8"><path d="M0.5 0.5 L4 4 L0.5 7.5" fill="none" stroke="#3c4a5e" stroke-width="1.6"/></svg>
<div class="a cb" style="left:44px;top:542px"></div>
<svg class="a" style="left:63px;top:542px" width="14" height="14" viewBox="0 0 16 16"><rect x="1" y="1" width="14" height="14" fill="#fff" stroke="#000" stroke-width="1.4"/><path d="M2.5 4.5h11M2.5 7h11M2.5 9.5h11M2.5 12h11" stroke="#9cb8e0" stroke-width="1"/><path d="M6 2v12" stroke="#7a9ad0"/><path d="M7 5.5h6.5M7 10.5h6.5" stroke="#f2e000" stroke-width="1.6"/><path d="M7 8h6.5" stroke="#e01010" stroke-width="1.6"/></svg>
<div class="t" style="left:82px;top:543px;color:#000">Reporting</div>
<div class="a cb" style="left:44px;top:560px"></div>
<svg class="a" style="left:63px;top:560px" width="14" height="14" viewBox="0 0 16 16"><path d="M4.5 4h3c2 0 3 1.5 3 4s-1 4-3 4h-3C2.5 12 1 10.3 1 8S2.5 4 4.5 4z" fill="none" stroke="#000" stroke-width="1.6"/><path d="M8.5 4h3c2 0 3.5 1.7 3.5 4s-1.5 4-3.5 4h-3c-2 0-3-1.5-3-4s1-4 3-4z" fill="none" stroke="#000" stroke-width="1.6"/><path d="M4 7.5h8" stroke="#7ab" stroke-width="1"/></svg>
<div class="t" style="left:82px;top:561px;color:#000">Process Chains</div>
<div class="a cb" style="left:44px;top:578px"></div>
<svg class="a" style="left:63px;top:578px" width="14" height="14" viewBox="0 0 16 16"><path d="M8 1l1.3 2.2l2.5-.6l.1 2.6l2.4 1l-1.3 2.2l1.3 2.2l-2.4 1l-.1 2.6l-2.5-.6L8 15l-1.3-2.2l-2.5.6l-.1-2.6l-2.4-1L3 7.6L1.7 5.4l2.4-1l.1-2.6l2.5.6z" fill="#8c8c8c" stroke="#6a6a6a" stroke-width="0.6"/><circle cx="8" cy="8" r="2.2" fill="#fff"/></svg>
<div class="t" style="left:82px;top:579px;color:#000">Function Modules</div>
<div class="a cb" style="left:44px;top:596px"></div>
<svg class="a" style="left:63px;top:596px" width="14" height="14" viewBox="0 0 16 16"><use href="#abap"/></svg>
<div class="t" style="left:82px;top:597px;color:#000">Reports (ABAP)</div>
<div class="a cb" style="left:44px;top:614px"></div>
<svg class="a" style="left:63px;top:614px" width="14" height="14" viewBox="0 0 16 16"><path d="M5 1.5h6l3.5 3.5v6L11 14.5H5L1.5 11V5z" fill="#bdbdbd" stroke="#333"/><path d="M4 6c1-2 3-2.5 5-2" stroke="#f4f4f4" stroke-width="1.5" fill="none"/></svg>
<div class="t" style="left:82px;top:615px;color:#000">Classes</div>
<div class="a cb" style="left:44px;top:632px"></div>
<svg class="a" style="left:63px;top:632px" width="14" height="14" viewBox="0 0 16 16"><path d="M5 4.5h2.5v-1.5c0-1 .7-1.7 1.5-1.7s1.5.7 1.5 1.7v1.5h2.5v3h-1.3c-.8 0-1.3.6-1.3 1.3s.5 1.3 1.3 1.3h1.3v3.5H8v-1.2c0-.8-.6-1.3-1.3-1.3s-1.3.5-1.3 1.3v1.2H5V11h-1.5c-.8 0-1.5-.6-1.5-1.5s.7-1.5 1.5-1.5H5z" fill="#fbc23a" stroke="#e0661a" stroke-width="1"/></svg>
<div class="t" style="left:82px;top:633px;color:#000">Web Dynpros</div>
<svg class="a" style="left:31px;top:653px" width="6" height="8"><path d="M0.5 0.5 L4 4 L0.5 7.5" fill="none" stroke="#3c4a5e" stroke-width="1.6"/></svg>
<div class="a cb" style="left:44px;top:650px"></div>
<svg class="a" style="left:63px;top:650px" width="14" height="14" viewBox="0 0 16 16"><path d="M1 2v12l7-6zM15 2v12l-7-6z" fill="#19d019" stroke="#000" stroke-width="1"/><path d="M8 8l7-6v12z" fill="#0fa80f"/><path d="M1 2v12M15 2v12" stroke="#000" stroke-width="1.5"/></svg>
<div class="t" style="left:82px;top:651px;color:#000">Transform./3.x Rules</div>
<div class="a cb" style="left:44px;top:668px"></div>
<svg class="a" style="left:63px;top:668px" width="14" height="14" viewBox="0 0 16 16"><use href="#ybox"/></svg>
<div class="t" style="left:82px;top:669px;color:#000">3.x InfoSources</div>
<div class="a cb" style="left:44px;top:686px"></div>
<svg class="a" style="left:63px;top:686px" width="14" height="14" viewBox="0 0 16 16"><path d="M1.5 6.5h4v-1h3v4h-2v2h1.5v3.5h-3v-1.5h-1.5v1.5h-2z" fill="#f2e600" stroke="#000"/><path d="M7 7.5L12.5 2c1-1 2.5 0 2.5 1.2l-5.5 5.8c-.8.8-2.2.8-2.7 0z" fill="#c8dcf4" stroke="#1a2a5a"/><path d="M10 5.5l2.5-2.5M11 6.5l2.5-2.5" stroke="#1a62b8"/></svg>
<div class="t" style="left:82px;top:687px;color:#000">DataSources</div>
<svg class="a" style="left:62px;top:416px" width="13" height="13" viewBox="0 0 13 13"><path d="M3 6.5L5.5 9.5L10 2.5" fill="none" stroke="#2f5a9a" stroke-width="1.8"/></svg>
<!-- pin icon -->
<svg class="a" style="left:221px;top:276px" width="7" height="9" viewBox="0 0 7 9"><circle cx="3.5" cy="2.5" r="2.3" fill="#111"/><path d="M3.5 4v5" stroke="#111" stroke-width="1.2"/><circle cx="2.8" cy="2" r="0.7" fill="#fff"/></svg>
<svg class="a" style="left:792px;top:252px" width="7" height="8" viewBox="0 0 7 8"><path d="M0.5 0.5h6L4 3.5v4H3v-4z" fill="#d8e4f2" stroke="#8aa0c0" stroke-width="0.9"/></svg>
<!-- focused cell -->
<div class="a" style="left:438px;top:295px;width:363px;height:20px;background:#d8e6fb;border:1px dotted #000"></div>
<div class="t" style="left:441px;top:299px;color:#000">VMM_H001</div>
<div class="a" style="left:222px;top:301px;width:0;height:0;border-top:4px solid transparent;border-bottom:4px solid transparent;border-left:4px solid #000"></div>
<!-- context menu -->
<div class="a" style="left:481px;top:308px;width:242px;height:283px;background:rgba(0,0,0,0.10);filter:blur(2px)"></div>
<div class="a" style="left:478px;top:305px;width:243px;height:283px;background:#fff;border:1px solid #9ea4ae"></div>
<div class="a" style="left:507px;top:306px;width:1px;height:280px;background:#e2e3e3"></div>
<div class="m" style="left:513px;top:312px">Display Data Flow</div>
<svg class="a" style="left:486px;top:311px" width="16" height="16" viewBox="0 0 16 16"><rect x="3.5" y="1.5" width="6" height="4.5" fill="#a8e0f0" stroke="#6b6b6b"/><rect x="0.5" y="10.5" width="5.5" height="4.5" fill="#a8e0f0" stroke="#6b6b6b"/><rect x="7.5" y="10.5" width="5.5" height="4.5" fill="#a8e0f0" stroke="#6b6b6b"/><path d="M6.5 6L3.3 10.5M6.5 6L10.3 10.5" stroke="#6b6b6b" stroke-width="0.9"/></svg>
<div class="m" style="left:513px;top:336px">Assign Layer</div>
<div class="a" style="left:704px;top:339px;width:0;height:0;border-top:4px solid transparent;border-bottom:4px solid transparent;border-left:4px solid #000"></div>
<svg class="a" style="left:486px;top:335px" width="16" height="16" viewBox="0 0 16 16"><path d="M3 1.5h10l2.5 3H0.5z" fill="#6fb8f2" stroke="#2a78c8" stroke-width="0.8"/><path d="M0.5 6.5h15l-2 2h-11z" fill="#9ad0f8" stroke="#2a78c8"/><path d="M0.5 9.5h15l-2 2h-11z" fill="#5aa8ea" stroke="#1e6ac0"/><path d="M0.5 12.5h15l-2 2h-11z" fill="#3a8ee0" stroke="#1a5ab0"/></svg>
<div class="a" style="left:513px;top:356px;width:203px;height:1px;background:repeating-linear-gradient(90deg,#c4c4c4 0 2px,transparent 2px 4px)"></div>
<div class="m" style="left:513px;top:363px">Scenario Assignment and Usage</div>
<svg class="a" style="left:486px;top:362px" width="16" height="16" viewBox="0 0 16 16"><rect x="0.5" y="0.5" width="13" height="15" fill="#fff" stroke="#5a6a82"/><path d="M3 3.5h8M3 10.5h8M3 12.5h8" stroke="#7a8ab8" stroke-width="0.9"/><rect x="3" y="5.5" width="4" height="3" fill="#c8d0e0"/><rect x="8.5" y="5.5" width="2.5" height="3" fill="#a8b4cc"/><path d="M3 14h8" stroke="#2a6ae0" stroke-width="1"/></svg>
<div class="m" style="left:513px;top:387px">Assign Scenario</div>
<div class="a" style="left:704px;top:390px;width:0;height:0;border-top:4px solid transparent;border-bottom:4px solid transparent;border-left:4px solid #000"></div>
<svg class="a" style="left:486px;top:386px" width="16" height="16" viewBox="0 0 16 16"><rect x="0.5" y="0.5" width="13" height="15" fill="#fff" stroke="#5a6a82"/><path d="M3 3.5h8M3 10.5h4M3 12.5h4" stroke="#7a8ab8" stroke-width="0.9"/><rect x="3" y="5.5" width="4" height="3" fill="#c8d0e0"/><rect x="6" y="8.5" width="9.5" height="7.5" fill="#3a3a3a"/><path d="M7.5 9.5l2.5 3l-2.5 3M11 9.5l2.5 3l-2.5 3" fill="none" stroke="#22f022" stroke-width="1.4"/></svg>
<div class="a" style="left:513px;top:407px;width:203px;height:1px;background:repeating-linear-gradient(90deg,#c4c4c4 0 2px,transparent 2px 4px)"></div>
<div class="m" style="left:513px;top:414px">Create Documentation</div>
<div class="a" style="left:704px;top:417px;width:0;height:0;border-top:4px solid transparent;border-bottom:4px solid transparent;border-left:4px solid #000"></div>
<svg class="a" style="left:486px;top:413px" width="16" height="16" viewBox="0 0 16 16"><use href="#wordc"/></svg>
<div class="m" style="left:513px;top:438px">Open Documentation</div>
<div class="a" style="left:704px;top:441px;width:0;height:0;border-top:4px solid transparent;border-bottom:4px solid transparent;border-left:4px solid #000"></div>
<svg class="a" style="left:486px;top:437px" width="16" height="16" viewBox="0 0 16 16"><use href="#wordd"/></svg>
<div class="m" style="left:513px;top:462px">List of all created documentations</div>
<svg class="a" style="left:486px;top:461px" width="16" height="16" viewBox="0 0 16 16"><path d="M0.5 3v-1.5c0-.5.5-1 1-1h4l2 2v4" fill="#f4f4f4" stroke="#555"/><path d="M3.5 5.5v-1c0-.5.5-1 1-1h4l2 2v6" fill="#f0f0f0" stroke="#555"/><path d="M6.5 8.5v-1c0-.5.5-1 1-1h4.5l2.5 2.5v5.5c0 .5-.5 1-1 1H7.5c-.5 0-1-.5-1-1z" fill="#e8e8e8" stroke="#555"/><path d="M0.5 3v7c0 .5.5 1 1 1h2M3.5 5.5v7c0 .5.5 1 1 1h2" fill="none" stroke="#555"/></svg>
<div class="a" style="left:513px;top:482px;width:203px;height:1px;background:repeating-linear-gradient(90deg,#c4c4c4 0 2px,transparent 2px 4px)"></div>
<div class="m" style="left:513px;top:489px">Comments</div>
<div class="a" style="left:704px;top:492px;width:0;height:0;border-top:4px solid transparent;border-bottom:4px solid transparent;border-left:4px solid #000"></div>
<svg class="a" style="left:486px;top:488px" width="16" height="16" viewBox="0 0 16 16"><use href="#bubble"/></svg>
<div class="m" style="left:513px;top:513px">Grid Comments</div>
<div class="a" style="left:704px;top:516px;width:0;height:0;border-top:4px solid transparent;border-bottom:4px solid transparent;border-left:4px solid #000"></div>
<svg class="a" style="left:486px;top:512px" width="16" height="16" viewBox="0 0 16 16"><path d="M0.5 3.5h13v8h-7l-3 3.5v-3.5h-3z" fill="#f4f4f4" stroke="#8f8f8f"/><path d="M4 7v1.5" stroke="#3a8ec8" stroke-width="1.3"/><rect x="7.5" y="0.5" width="8" height="8" fill="#fff" stroke="#3a9a3a"/><path d="M9 2l5 5M14 2l-5 5" stroke="#2a8a2a" stroke-width="1.6"/></svg>
<div class="a" style="left:513px;top:533px;width:203px;height:1px;background:repeating-linear-gradient(90deg,#c4c4c4 0 2px,transparent 2px 4px)"></div>
<div class="a" style="left:480px;top:535px;width:239px;height:24px;border:1px solid #eec75e;border-radius:3px;background:linear-gradient(#fdf4d2,#f9e7a8 30%,#f6d978 50%,#f9e6a4 72%,#fdf7df)"></div>
<div class="m" style="left:513px;top:540px">Analysis</div>
<div class="a" style="left:704px;top:543px;width:0;height:0;border-top:4px solid transparent;border-bottom:4px solid transparent;border-left:4px solid #000"></div>
<svg class="a" style="left:486px;top:539px" width="16" height="16" viewBox="0 0 16 16"><use href="#magbadge"/></svg>
<div class="a" style="left:513px;top:560px;width:203px;height:1px;background:repeating-linear-gradient(90deg,#c4c4c4 0 2px,transparent 2px 4px)"></div>
<div class="m" style="left:513px;top:567px">Others</div>
<div class="a" style="left:704px;top:570px;width:0;height:0;border-top:4px solid transparent;border-bottom:4px solid transparent;border-left:4px solid #000"></div>
<svg class="a" style="left:486px;top:566px" width="16" height="16" viewBox="0 0 16 16"><rect x="0.5" y="1" width="2.5" height="2.5" fill="#3a6ad8"/><rect x="0.5" y="6.5" width="2.5" height="2.5" fill="#3a6ad8"/><rect x="0.5" y="12" width="2.5" height="2.5" fill="#3a6ad8"/><path d="M5 2.2h8.5M5 7.7h8.5M5 13.2h8.5" stroke="#111" stroke-width="1.2"/></svg>
<!-- submenu -->
<div class="a" style="left:725px;top:538px;width:326px;height:124px;background:rgba(0,0,0,0.10);filter:blur(2px)"></div>
<div class="a" style="left:721px;top:535px;width:327px;height:124px;background:#fff;border:1px solid #9ea4ae"></div>
<div class="a" style="left:750px;top:536px;width:1px;height:97px;background:#e2e3e3"></div>
<div class="m" style="left:756px;top:542px">Where-used Analysis</div>
<svg class="a" style="left:728px;top:541px" width="16" height="16" viewBox="0 0 16 16"><rect x="0.5" y="5.5" width="6" height="5.5" fill="#f6f000" stroke="#000"/><path d="M6.5 8.3h8.5M7 8.3l6-6M7 8.3l6 6" stroke="#0a0a8a" stroke-width="1"/><path d="M15 8.3l-2-2M15 8.3l-2 2M13 2.3h-3M13 2.3v3M13 14.3h-3M13 14.3v-3" stroke="#0a0a8a" stroke-width="1.3"/></svg>
<div class="m" style="left:756px;top:566px">Usage in Transports</div>
<svg class="a" style="left:728px;top:565px" width="16" height="16" viewBox="0 0 16 16"><rect x="0.5" y="3" width="10" height="8" rx="1" fill="#f4a040" stroke="#d07a20" stroke-width="0.8"/><path d="M2 5.5h7M2 8h7" stroke="#fbd090" stroke-width="1"/><path d="M10.5 5h3.5l1.5 2.5v4h-5z" fill="#5ab8f0" stroke="#2a88d0" stroke-width="0.8"/><rect x="0" y="11" width="16" height="1.5" fill="#7a8aa0"/><circle cx="4" cy="13" r="2" fill="#8a8a8a" stroke="#444" stroke-width="0.8"/><circle cx="12" cy="13" r="2" fill="#8a8a8a" stroke="#444" stroke-width="0.8"/></svg>
<div class="m" style="left:756px;top:590px">Show included InfoObjects and their DataSources</div>
<svg class="a" style="left:728px;top:589px" width="16" height="16" viewBox="0 0 16 16"><path d="M0.5 8h5M1 8l3-3M1 8l3 3M4.5 1.5l-3.5 0v3M4.5 14.5l-3.5 0v-3" stroke="#0a0a8a" stroke-width="1.2" fill="none"/><path d="M1 1l4 4M1 15l4-4" stroke="#0a0a8a"/><path d="M5.5 5.5h4v-1h3v4h-2v2h1.5v3.5h-3v-1.5h-1.5v1.5h-2z" fill="#f2e600" stroke="#000"/><path d="M10 6L14 2c.8-.8 2 .2 1.5 1l-3.5 4z" fill="#c8dcf4" stroke="#1a2a5a" stroke-width="0.8"/></svg>
<div class="m" style="left:756px;top:614px">Analyze/Compare</div>
<svg class="a" style="left:728px;top:613px" width="16" height="16" viewBox="0 0 16 16"><circle cx="6" cy="6" r="4.8" fill="#d8ecfc" stroke="#8aa0b8" stroke-width="1.2"/><path d="M3.5 5c.5-1.5 1.5-2 3-2" stroke="#fff" stroke-width="1.2" fill="none"/><path d="M9.5 9.5l4.5 4.5" stroke="#e8801a" stroke-width="2.6" stroke-linecap="round"/></svg>
<div class="a" style="left:723px;top:633px;width:323px;height:24px;border:1px solid #eec75e;border-radius:3px;background:linear-gradient(#fdf4d2,#f9e7a8 30%,#f6d978 50%,#f9e6a4 72%,#fdf7df)"></div>
<div class="m" style="left:756px;top:638px">BW-Data Lineage</div>
<svg class="a" style="left:728px;top:637px" width="16" height="16" viewBox="0 0 16 16"><rect x="0.5" y="3" width="6" height="12" fill="#fff" stroke="#5a6a9a" stroke-width="0.8"/><rect x="1" y="4" width="5" height="2" fill="#5a8ad8"/><path d="M5.5 5L10 15H1z" fill="#f0dc00" stroke="#000"/><path d="M9 9h6M9 9l4.5-5M9 9l4.5 5" stroke="#333" stroke-width="0.9"/><path d="M15 9l-1.5-1.5v3zM13.5 4h-2M13.5 4v2M13.5 14h-2M13.5 14v-2" stroke="#333" stroke-width="1.1"/></svg>
</body></html>
